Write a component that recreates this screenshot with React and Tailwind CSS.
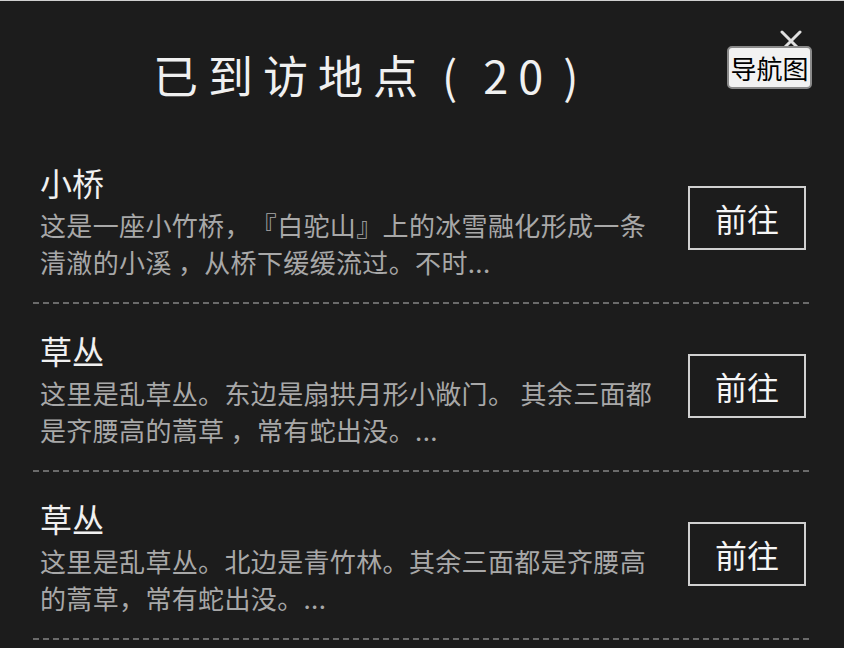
import React from 'react';

const PLACES = [
  {
    name: '小桥',
    desc: '这是一座小竹桥，『白驼山』上的冰雪融化形成一条清澈的小溪 ，从桥下缓缓流过。不时...',
  },
  {
    name: '草丛',
    desc: '这里是乱草丛。东边是扇拱月形小敞门。 其余三面都是齐腰高的蒿草 ，常有蛇出没。...',
  },
  {
    name: '草丛',
    desc: '这里是乱草丛。北边是青竹林。其余三面都是齐腰高的蒿草，常有蛇出没。...',
  },
];

const FONT = { fontFamily: '"Noto Sans CJK SC", "Noto Sans", sans-serif' };

export default function App() {
  return (
    <div className="w-[844px] h-[648px] overflow-hidden bg-[#1c1c1c] border-t border-[#cfcfcf] relative [text-spacing-trim:space-all]" style={FONT}>
      {/* Header */}
      <div className="h-[135px] flex items-start pt-[46px] pl-[153px]">
        <h1 className="text-[45px] leading-[56px] tracking-[10px] text-[#f0f0f0] font-normal whitespace-nowrap">
          已到访地点<span className="ml-[14px]">(</span><span className="ml-[16px]">20</span><span className="ml-[10px]">)</span>
        </h1>
      </div>

      {/* Close + nav map */}
      <div className="absolute left-[780px] top-[29px] w-[22px] h-[22px]">
        <svg width="22" height="22" viewBox="0 0 22 22">
          <path d="M2 2 L20 20 M20 2 L2 20" stroke="#e0e0e0" strokeWidth="3" strokeLinecap="round" />
        </svg>
      </div>
      <button className="absolute left-[727px] top-[45px] w-[85px] h-[43px] bg-[#f2f2f2] border-2 border-[#8a8a8a] rounded-[5px] text-[26px] leading-[30px] text-black flex items-center justify-center">
        导航图
      </button>

      {/* List */}
      <div className="pl-[33px] pr-[31px]">
        {PLACES.map((p, i) => (
          <div key={i}>
            <div className="flex items-center pt-[26px] pb-[22px] px-[7px]">
              <div className="flex-1 min-w-0">
                <div className="text-[32px] leading-[40px] text-[#f0f0f0]">{p.name}</div>
                <p className="mt-[4px] w-[622px] text-[26px] leading-[37px] tracking-[0.35px] text-[#a8a8a8]">{p.desc}</p>
              </div>
              <button className="shrink-0 w-[118px] h-[64px] border-2 border-[#d0d0d0] text-[32px] text-[#f5f5f5] flex items-center justify-center -mt-[6px]">
                前往
              </button>
            </div>
            <div className="h-[2px] bg-[repeating-linear-gradient(90deg,#6a6a6a_0_6px,transparent_6px_10px)]" />
          </div>
        ))}
      </div>
    </div>
  );
}
